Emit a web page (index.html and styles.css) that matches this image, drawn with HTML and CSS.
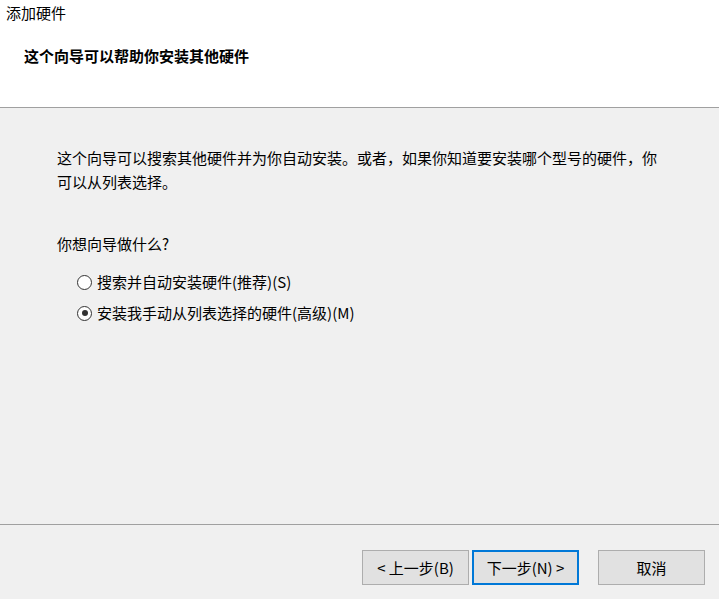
FILE: index.html
```html
<!DOCTYPE html>
<html lang="zh-CN">
<head>
<meta charset="utf-8">
<title>添加硬件</title>
<link rel="stylesheet" href="styles.css">
</head>
<body>
<div class="window">
  <header class="header">
    <div class="title">添加硬件</div>
    <h1 class="heading">这个向导可以帮助你安装其他硬件</h1>
  </header>
  <main class="content">
    <p class="intro">这个向导可以搜索其他硬件并为你自动安装。或者，如果你知道要安装哪个型号的硬件，你可以从列表选择。</p>
    <p class="question">你想向导做什么?</p>
    <div class="options">
      <label class="option"><span class="radio"></span><span>搜索并自动安装硬件(推荐)(S)</span></label>
      <label class="option"><span class="radio checked"></span><span>安装我手动从列表选择的硬件(高级)(M)</span></label>
    </div>
  </main>
  <footer class="footer">
    <div class="btn">&lt; 上一步(B)</div>
    <div class="btn default">下一步(N) &gt;</div>
    <div class="btn cancel">取消</div>
  </footer>
</div>
</body>
</html>
```
FILE: styles.css
```css
html, body {
  margin: 0;
  padding: 0;
}
body {
  background: #f0f0f0;
  font-family: "Noto Sans CJK SC", "Liberation Sans", sans-serif;
  font-size: 15px;
  color: #000;
}
.window {
  width: 719px;
  height: 599px;
  display: flex;
  flex-direction: column;
}
.header {
  background: #fff;
  height: 108px;
  border-bottom: 1px solid #a0a0a0;
  box-sizing: border-box;
  padding: 2px 0 0 6px;
  flex: none;
}
.title {
  font-size: 15px;
  line-height: 22px;
}
.heading {
  margin: 21px 0 0 18px;
  font-size: 15px;
  font-weight: bold;
  line-height: 22px;
}
.content {
  flex: 1;
  padding: 0 0 0 57px;
  border-bottom: 1px solid #a0a0a0;
  box-sizing: border-box;
}
.intro {
  margin: 38px 0 0 0;
  width: 610px;
  line-height: 24px;
}
.question {
  margin: 38px 0 0 0;
  line-height: 24px;
}
.options {
  margin: 14px 0 0 20px;
  display: flex;
  flex-direction: column;
  gap: 7px;
}
.option {
  display: flex;
  align-items: center;
  gap: 5px;
  line-height: 24px;
}
.radio {
  width: 13px;
  height: 13px;
  border: 1px solid #333;
  border-radius: 50%;
  background: #fff;
  box-sizing: content-box;
  position: relative;
  flex: none;
}
.radio.checked::after {
  content: "";
  position: absolute;
  left: 3.5px;
  top: 3.5px;
  width: 6px;
  height: 6px;
  border-radius: 50%;
  background: #333;
}
.footer {
  height: 74px;
  flex: none;
  box-sizing: border-box;
  display: flex;
  padding: 25px 0 0 362px;
  gap: 3px;
}
.btn {
  width: 107px;
  height: 35px;
  box-sizing: border-box;
  background: #e1e1e1;
  border: 1px solid #adadad;
  display: flex;
  align-items: center;
  justify-content: center;
  font-size: 15px;
}
.btn.default {
  border: 2px solid #0078d7;
}
.btn.cancel {
  margin-left: 16px;
}
```
